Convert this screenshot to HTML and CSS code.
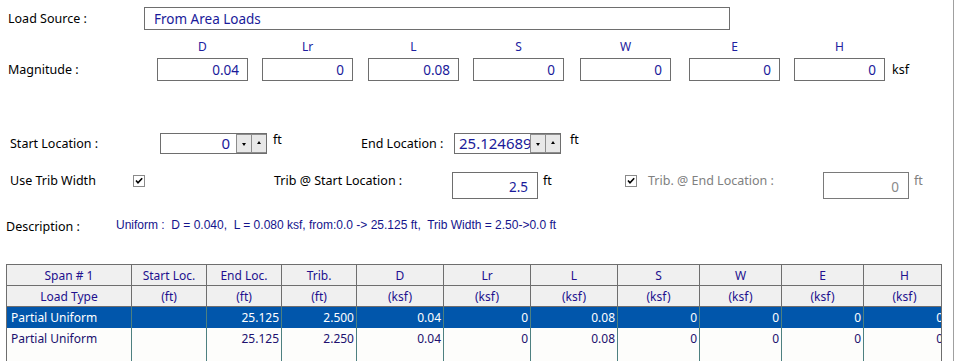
FILE: index.html
```html
<!DOCTYPE html>
<html lang="en">
<head>
    <meta charset="UTF-8">
    <title>Partial Uniform Load</title>
    <link rel="stylesheet" href="styles.css">
</head>
<body>
    <div class="panel">

        <!-- Load source -->
        <div class="row row-source">
            <span class="label w-source">Load Source :</span>
            <div class="box source-box">From Area Loads</div>
        </div>

        <!-- Magnitudes -->
        <div class="mag-grid mag-head">
            <span>D</span><span>Lr</span><span>L</span><span>S</span><span>W</span><span>E</span><span>H</span>
        </div>
        <div class="row row-mag">
            <span class="label w-mag">Magnitude :</span>
            <div class="mag-grid">
                <div class="box num">0.04</div>
                <div class="box num">0</div>
                <div class="box num">0.08</div>
                <div class="box num">0</div>
                <div class="box num">0</div>
                <div class="box num">0</div>
                <div class="box num">0</div>
                <span class="unit">ksf</span>
            </div>
        </div>

        <!-- Locations -->
        <div class="row row-loc">
            <span class="label w-start">Start Location :</span>
            <div class="spin">
                <div class="spin-value">0</div>
                <div class="spin-btn"><span class="tri-down"></span></div>
                <div class="spin-btn"><span class="tri-up"></span></div>
            </div>
            <span class="unit unit-loc w-ft1">ft</span>
            <span class="label w-end">End Location :</span>
            <div class="spin">
                <div class="spin-value clip">25.124689</div>
                <div class="spin-btn"><span class="tri-down"></span></div>
                <div class="spin-btn"><span class="tri-up"></span></div>
            </div>
            <span class="unit unit-loc unit-end">ft</span>
        </div>

        <!-- Trib width -->
        <div class="row row-trib">
            <span class="label w-trib">Use Trib Width</span>
            <div class="cb-cell w-cb1">
                <svg class="check" width="12" height="12" viewBox="0 0 12 12">
                    <rect x="0.5" y="0.5" width="11" height="11" fill="#fff" stroke="#8a8a8a"/>
                    <path d="M3 5.5 L5 7.8 L9.2 3.2" fill="none" stroke="#000" stroke-width="1.6"/>
                </svg>
            </div>
            <span class="label w-tstart">Trib @ Start Location :</span>
            <div class="box num trib-box">2.5</div>
            <span class="unit unit-trib w-ft2">ft</span>
            <div class="cb-cell w-cb2">
                <svg class="check" width="12" height="12" viewBox="0 0 12 12">
                    <rect x="0.5" y="0.5" width="11" height="11" fill="#fff" stroke="#8a8a8a"/>
                    <path d="M3 5.5 L5 7.8 L9.2 3.2" fill="none" stroke="#000" stroke-width="1.6"/>
                </svg>
            </div>
            <span class="label muted w-tend">Trib. @ End Location :</span>
            <div class="box num trib-box disabled">0</div>
            <span class="unit unit-trib muted">ft</span>
        </div>

        <!-- Description -->
        <div class="row row-desc">
            <span class="label w-desc">Description :</span>
            <span class="desc-text">Uniform :&nbsp; D = 0.040,&nbsp; L = 0.080 ksf, from:0.0 -&gt; 25.125 ft,&nbsp; Trib Width = 2.50-&gt;0.0 ft</span>
        </div>

        <!-- Load grid -->
        <div class="grid-wrap">
            <table class="load-table">
                <colgroup>
                    <col style="width:125px"><col style="width:75px"><col style="width:75px"><col style="width:75px">
                    <col style="width:87px"><col style="width:87px"><col style="width:87px">
                    <col style="width:82px"><col style="width:82px"><col style="width:82px"><col style="width:82px">
                </colgroup>
                <thead>
                    <tr>
                        <th>Span # 1</th><th>Start Loc.</th><th>End Loc.</th><th>Trib.</th>
                        <th>D</th><th>Lr</th><th>L</th><th>S</th><th>W</th><th>E</th><th>H</th>
                    </tr>
                    <tr>
                        <th>Load Type</th><th>(ft)</th><th>(ft)</th><th>(ft)</th>
                        <th>(ksf)</th><th>(ksf)</th><th>(ksf)</th><th>(ksf)</th><th>(ksf)</th><th>(ksf)</th><th>(ksf)</th>
                    </tr>
                </thead>
                <tbody>
                    <tr class="selected">
                        <td class="type">Partial Uniform</td><td></td><td>25.125</td><td>2.500</td>
                        <td>0.04</td><td>0</td><td>0.08</td><td>0</td><td>0</td><td>0</td><td>0</td>
                    </tr>
                    <tr>
                        <td class="type">Partial Uniform</td><td></td><td>25.125</td><td>2.250</td>
                        <td>0.04</td><td>0</td><td>0.08</td><td>0</td><td>0</td><td>0</td><td>0</td>
                    </tr>
                    <tr class="empty">
                        <td></td><td></td><td></td><td></td><td></td><td></td><td></td><td></td><td></td><td></td><td></td>
                    </tr>
                </tbody>
            </table>
        </div>
    </div>
</body>
</html>
```

FILE: styles.css
```css
body {
    margin: 0;
    padding: 0;
    background-color: #fff;
    font-family: 'Noto Sans', sans-serif;
    font-size: 12.5px;
    color: #000;
    overflow: hidden;
}

/* Main panel with the grey edge on the right */
.panel {
    width: 953px;
    height: 361px;
    border-right: 1px solid #a0a0a0;
    overflow: hidden;
}

.row {
    display: flex;
    align-items: center;
}

.label {
    white-space: nowrap;
    flex: none;
}

.muted {
    color: #808080;
}

.box {
    box-sizing: border-box;
    border: 1px solid #6e6e6e;
    background-color: #fff;
    color: #1a1a9a;
    font-size: 13.5px;
    display: flex;
    align-items: center;
    flex: none;
}

.num {
    justify-content: flex-end;
    padding-right: 8px;
}

.unit {
    flex: none;
}

/* Load source */
.row-source {
    margin-top: 7px;
    height: 23px;
    padding-left: 8px;
}

.w-source { width: 136px; }

.source-box {
    width: 586px;
    height: 23px;
    padding-left: 9px;
}

/* Magnitudes */
.mag-grid {
    display: grid;
    grid-template-columns: 105px 106px 105px 107px 109px 105px 98px auto;
    align-items: center;
}

.mag-head {
    margin-top: 8px;
    height: 16px;
    padding-left: 157px;
    color: #2020a0;
    font-size: 12px;
}

.mag-head span {
    width: 91px;
    text-align: center;
}

.row-mag {
    margin-top: 4px;
    height: 23px;
    padding-left: 8px;
}

.w-mag { width: 149px; }

.row-mag .box {
    width: 91px;
    height: 23px;
}

/* Locations */
.row-loc {
    margin-top: 52px;
    height: 21px;
    padding-left: 10px;
}

.w-start { width: 150px; }
.w-end { width: 93px; }

.spin {
    display: flex;
    width: 107px;
    height: 21px;
    box-sizing: border-box;
    border: 1px solid #6e6e6e;
    background-color: #fff;
    flex: none;
}

.spin-value {
    flex: 1 1 auto;
    width: 0;
    color: #1a1a9a;
    font-size: 15px;
    line-height: 19px;
    text-align: right;
    padding-right: 6px;
    overflow: hidden;
    white-space: nowrap;
}

.spin-value.clip {
    text-align: left;
    padding: 0 0 0 4px;
}

.spin-btn {
    flex: 0 0 15px;
    box-sizing: border-box;
    border: 1px solid #8c8c8c;
    border-right-width: 0;
    background-color: #e8e8e8;
    display: flex;
    align-items: center;
    justify-content: center;
}

.tri-down {
    width: 0;
    height: 0;
    border-left: 2.5px solid transparent;
    border-right: 2.5px solid transparent;
    border-top: 3px solid #000;
    margin-top: 2px;
}

.tri-up {
    width: 0;
    height: 0;
    border-left: 2.5px solid transparent;
    border-right: 2.5px solid transparent;
    border-bottom: 3px solid #000;
    margin-top: -2px;
}

.unit-loc {
    align-self: flex-start;
    margin-top: -2px;
    margin-left: 6px;
}

.w-ft1 { width: 88px; }
.unit-end { margin-left: 9px; }

/* Trib width */
.row-trib {
    margin-top: 18px;
    height: 27px;
    align-items: flex-start;
    padding-left: 10px;
}

.row-trib .label,
.row-trib .unit {
    line-height: 18px;
}

.w-trib { width: 123px; }

.cb-cell {
    flex: none;
    padding-top: 3px;
}

.check { display: block; }

.w-cb1 { width: 141px; }
.w-tstart { width: 178px; }

.trib-box {
    width: 86px;
    height: 27px;
    padding-right: 9px;
    padding-top: 3px;
}

.trib-box.disabled {
    border-color: #7a7a7a;
    color: #8a8a8a;
}

.unit-trib { margin-left: 5px; }
.w-ft2 { width: 82px; }
.w-cb2 { width: 23px; }
.w-tend { width: 175px; }

/* Description */
.row-desc {
    margin-top: 18px;
    height: 18px;
    padding-left: 6px;
}

.w-desc { width: 110px; }

.desc-text {
    font-family: 'Liberation Sans', Arial, sans-serif;
    font-size: 12px;
    color: #14148c;
    margin-top: -3px;
    white-space: nowrap;
}

/* Load grid */
.grid-wrap {
    margin-top: 29px;
    margin-left: 6px;
    width: 936px;
    overflow: hidden;
    border-left: 1px solid #6e6e6e;
    border-right: 1px solid #6e6e6e;
    box-sizing: border-box;
}

.load-table {
    table-layout: fixed;
    border-collapse: collapse;
    width: 939px;
    margin-left: -1px;
}

.load-table th {
    height: 21px;
    padding: 0;
    background-color: #f0f0f0;
    border: 1px solid #6e6e6e;
    color: #22108e;
    font-weight: normal;
    font-size: 12px;
    text-align: center;
    box-sizing: border-box;
}

.load-table td {
    height: 21px;
    padding: 0 2px 0 0;
    background-color: #fdfdfb;
    border-left: 1px solid #4d8080;
    border-right: 1px solid #4d8080;
    color: #20106e;
    font-size: 12px;
    text-align: right;
    white-space: nowrap;
    overflow: hidden;
    box-sizing: border-box;
}

.load-table td.type {
    text-align: left;
    padding-left: 4px;
}

.load-table tr.selected td {
    background-color: #0156ab;
    color: #fff;
}
```
